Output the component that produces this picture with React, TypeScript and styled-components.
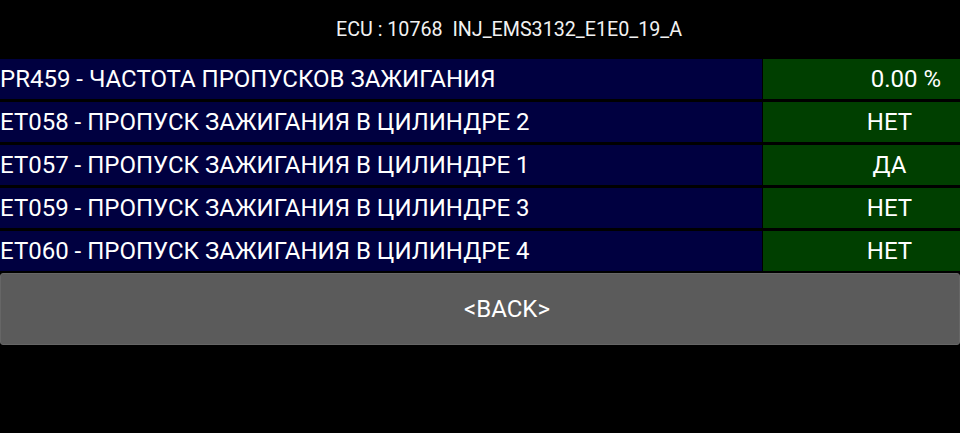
import styled, { createGlobalStyle } from "styled-components";

const GlobalStyle = createGlobalStyle`
  html, body {
    margin: 0;
    padding: 0;
    background: #000;
  }
  body {
    font-family: Roboto, "Noto Sans", "Liberation Sans", sans-serif;
    color: #fff;
  }
`;

const Screen = styled.div`
  width: 960px;
  height: 433px;
  background: #000;
  display: flex;
  flex-direction: column;
  overflow: hidden;
`;

const Header = styled.div`
  height: 59px;
  display: flex;
  align-items: center;
  justify-content: center;
  padding: 0 0 0 58px;
  box-sizing: border-box;
  font-size: 19.7px;
  color: #f2f2f2;
  white-space: pre;
`;

const Table = styled.div`
  display: flex;
  flex-direction: column;
  gap: 3px;
`;

const Row = styled.div`
  display: flex;
  height: 40px;
  gap: 1px;
`;

const Label = styled.div`
  width: 762px;
  background: #000040;
  display: flex;
  align-items: center;
  font-size: 24px;
  color: #fff;
  white-space: nowrap;
`;

const Value = styled.div<{ $align: "center" | "right" }>`
  flex: 1;
  background: #003f00;
  display: flex;
  align-items: center;
  justify-content: ${({ $align }) => ($align === "right" ? "flex-end" : "center")};
  padding: ${({ $align }) => ($align === "right" ? "0 19px 0 0" : "0 0 0 56px")};
  font-size: 24px;
  color: #fff;
`;

const BackButton = styled.button`
  margin-top: 2px;
  height: 72px;
  width: 960px;
  background: #5b5b5b;
  border: 1px solid #666;
  border-radius: 3px;
  color: #fff;
  font-family: inherit;
  font-size: 24px;
  padding: 0 0 0 54px;
  cursor: pointer;
`;

const rows: { label: string; value: string; align: "center" | "right" }[] = [
  { label: "PR459 - ЧАСТОТА ПРОПУСКОВ ЗАЖИГАНИЯ", value: "0.00 %", align: "right" },
  { label: "ET058 - ПРОПУСК ЗАЖИГАНИЯ В ЦИЛИНДРЕ 2", value: "НЕТ", align: "center" },
  { label: "ET057 - ПРОПУСК ЗАЖИГАНИЯ В ЦИЛИНДРЕ 1", value: "ДА", align: "center" },
  { label: "ET059 - ПРОПУСК ЗАЖИГАНИЯ В ЦИЛИНДРЕ 3", value: "НЕТ", align: "center" },
  { label: "ET060 - ПРОПУСК ЗАЖИГАНИЯ В ЦИЛИНДРЕ 4", value: "НЕТ", align: "center" },
];

const App = () => {
  return (
    <>
      <GlobalStyle />
      <Screen>
        <Header>{"ECU : 10768  INJ_EMS3132_E1E0_19_A"}</Header>
        <Table>
          {rows.map((r) => (
            <Row key={r.label}>
              <Label>{r.label}</Label>
              <Value $align={r.align}>{r.value}</Value>
            </Row>
          ))}
        </Table>
        <BackButton>&lt;BACK&gt;</BackButton>
      </Screen>
    </>
  );
};

export default App;
